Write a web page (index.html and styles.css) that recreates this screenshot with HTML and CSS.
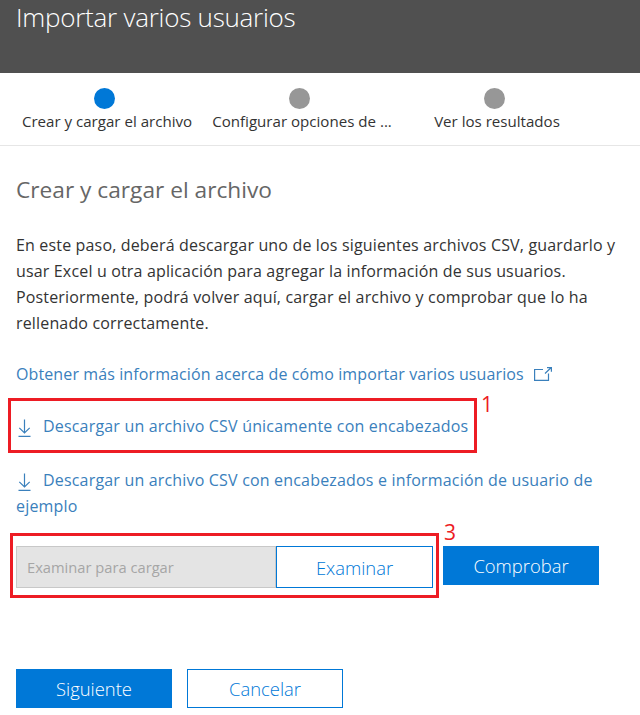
FILE: index.html
```html
<!DOCTYPE html>
<html lang="es">
<head>
<meta charset="utf-8">
<title>Importar varios usuarios</title>
<link rel="stylesheet" href="styles.css">
</head>
<body>
<header class="header"><h1 class="title">Importar varios usuarios</h1></header>
<nav class="steps">
  <div class="step"><span class="dot dot-active"></span><span class="step-label">Crear y cargar el archivo</span></div>
  <div class="step"><span class="dot"></span><span class="step-label">Configurar opciones de ...</span></div>
  <div class="step"><span class="dot"></span><span class="step-label">Ver los resultados</span></div>
</nav>
<main class="content">
  <h2 class="heading">Crear y cargar el archivo</h2>
  <p class="intro">En este paso, deberá descargar uno de los siguientes archivos CSV, guardarlo y usar Excel u otra aplicación para agregar la información de sus usuarios. Posteriormente, podrá volver aquí, cargar el archivo y comprobar que lo ha rellenado correctamente.</p>
  <a class="link link-more" href="#">Obtener más información acerca de cómo importar varios usuarios<svg class="icon-ext" width="18" height="14" viewBox="0 0 18 14" fill="none" stroke="currentColor" stroke-width="1.2"><path d="M9 2.500H.6V13.400H14.500V6.500"/><path d="M11 6.500L17 .8M13 .6H17.400V4.800"/></svg></a>
  <div class="download download-first">
    <a class="link" href="#"><svg class="icon-down" width="13" height="18" viewBox="0 0 13 18" fill="none" stroke="currentColor" stroke-width="1.2"><path d="M6.500 .5V14M1.300 8.800L6.500 14L11.700 8.800M.5 17.300H12.500"/></svg>Descargar un archivo CSV únicamente con encabezados</a>
    <span class="callout callout-1"><span class="callout-num">1</span></span>
  </div>
  <div class="download download-second">
    <a class="link" href="#"><svg class="icon-down" width="13" height="18" viewBox="0 0 13 18" fill="none" stroke="currentColor" stroke-width="1.2"><path d="M6.500 .5V14M1.300 8.800L6.500 14L11.700 8.800M.5 17.300H12.500"/></svg>Descargar un archivo CSV con encabezados e información de usuario de ejemplo</a>
  </div>
  <div class="upload">
    <div class="file-field">
      <span class="file-input">Examinar para cargar</span>
      <button class="btn btn-outline btn-browse" type="button">Examinar</button>
      <span class="callout callout-3"><span class="callout-num">3</span></span>
    </div>
    <button class="btn btn-primary btn-check" type="button">Comprobar</button>
  </div>
  <div class="actions">
    <button class="btn btn-primary" type="button">Siguiente</button>
    <button class="btn btn-outline" type="button">Cancelar</button>
  </div>
</main>
</body>
</html>
```
FILE: styles.css
```css
* { box-sizing: border-box; }
html, body { margin: 0; padding: 0; background: #fff; }
body { font-family: "Open Sans", "Noto Sans", sans-serif; color: #333; width: 640px; height: 715px; overflow: hidden; }

.header { height: 73px; background: #505050; padding: 0 16px; }
.title { margin: 0; font-size: 26px; font-weight: 300; line-height: 35px; letter-spacing: -.25px; color: #fff; }

.steps { display: flex; height: 73px; padding: 15px 7px 0; border-bottom: 1px solid #e6e6e6; }
.step { width: 195px; display: flex; flex-direction: column; align-items: center; }
.dot { width: 21px; height: 21px; border-radius: 50%; background: #979797; }
.dot-active { background: #0078d7; }
.step-label { margin-top: 2px; font-size: 15.100px; line-height: 20px; color: #333; padding-left: 5px; white-space: nowrap; }

.content { padding: 0 16px; }
.heading { margin: 30px 0 0; font-size: 22.700px; font-weight: 400; line-height: 28px; color: #666; }
.intro { margin: 28px 0 0; width: 608px; font-size: 16px; letter-spacing: .16px; line-height: 26px; color: #333; }

.link { color: #3a80bc; font-size: 16px; letter-spacing: .18px; line-height: 26px; text-decoration: none; }
.link-more { display: block; margin-top: 25px; letter-spacing: .11px; }
.icon-ext { margin-left: 10px; vertical-align: -1px; }
.icon-down { margin: 0 12px 0 2px; vertical-align: -5px; }

.download { position: relative; line-height: 26px; }
.download-first { margin-top: 26px; }
.download-second { margin-top: 28px; }

.callout { position: absolute; border: 3px solid #ed1c24; pointer-events: none; }
.callout-num { position: absolute; color: #ed1c24; font-size: 21px; line-height: 24px; }
.callout-1 { left: -8px; top: -15px; width: 469px; height: 55px; }
.callout-1 .callout-num { left: 470px; top: -9px; }
.callout-3 { left: -6px; top: -13px; width: 429px; height: 65px; }
.callout-3 .callout-num { left: 431px; top: -16px; }

.upload { display: flex; gap: 10px; margin-top: 27px; align-items: flex-start; }
.file-field { position: relative; display: flex; width: 417px; height: 42px; }
.file-input { width: 260px; height: 42px; background: #e4e4e4; border: 1px solid #c8c8c8; padding-left: 10px; font-size: 14.700px; line-height: 41px; color: #a6a6a6; }
.btn { display: block; width: 156px; height: 39px; font-family: inherit; font-size: 18.400px; font-weight: 300; padding: 0; border-radius: 0; }
.btn-primary { background: #0078d7; border: 1px solid #0078d7; color: #fff; }
.btn-outline { background: #fff; border: 1px solid #0078d7; color: #0078d7; }
.btn-browse { width: 157px; height: 42px; }

.actions { display: flex; gap: 15px; margin-top: 81px; }
```
